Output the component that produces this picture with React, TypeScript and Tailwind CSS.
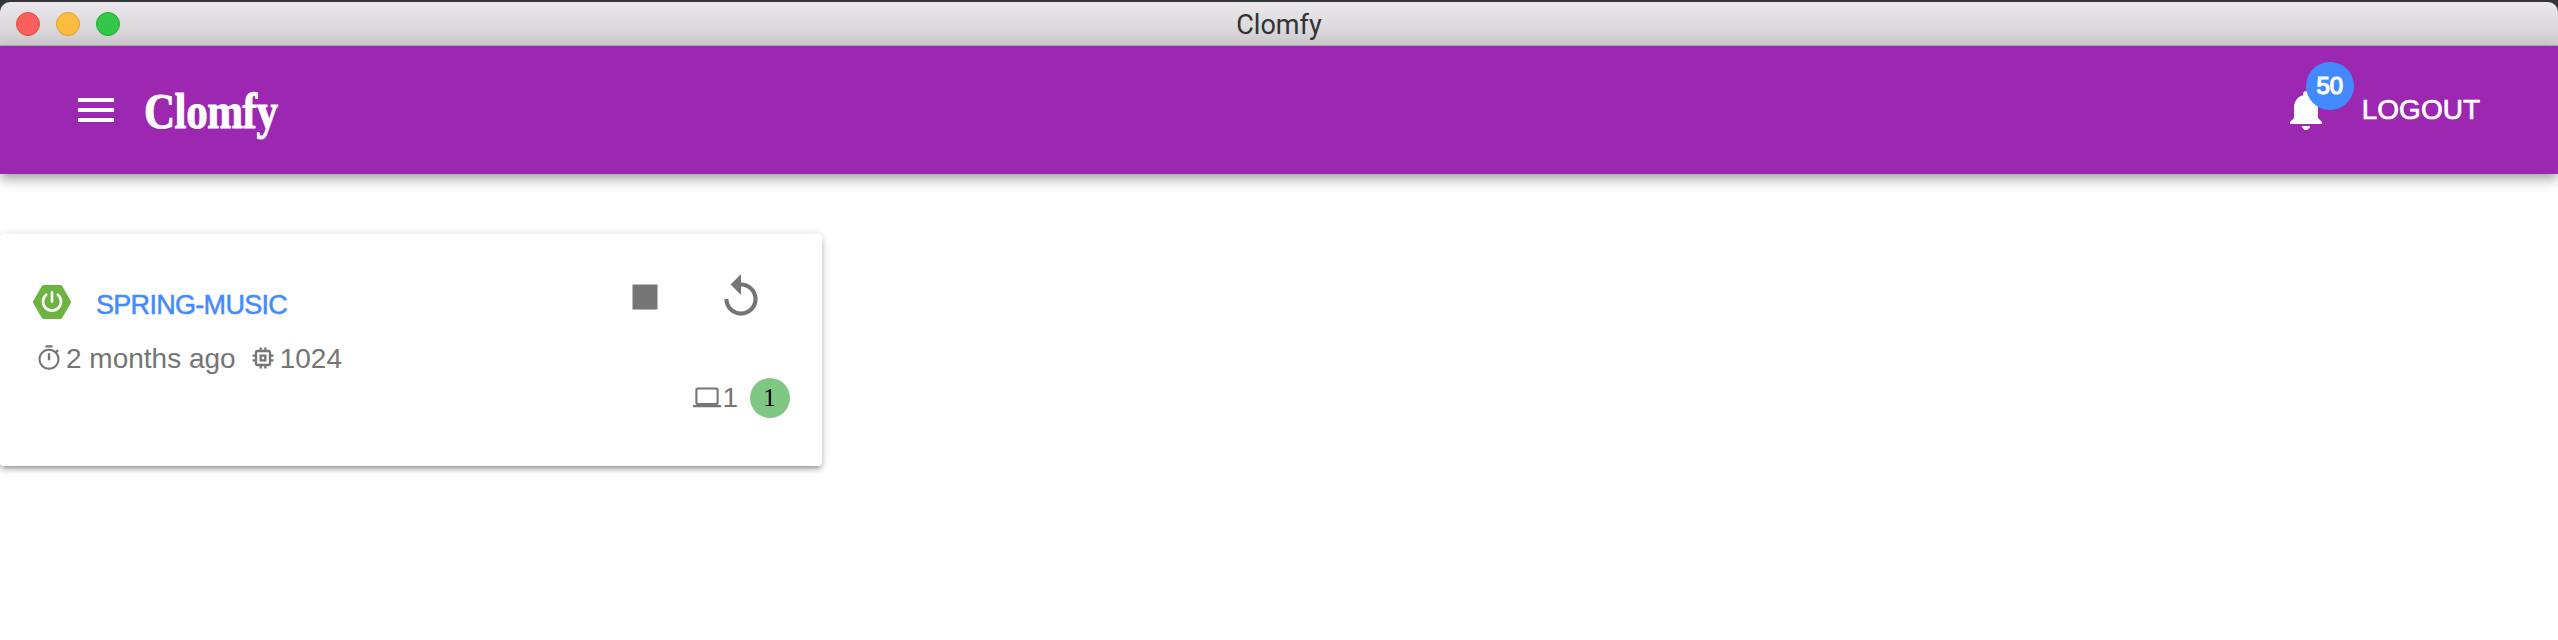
import React from "react";

function Icon({ d, className }: { d: string; className: string }) {
  return (
    <svg viewBox="0 0 24 24" fill="currentColor" className={className} aria-hidden="true">
      <path d={d} />
    </svg>
  );
}

const MENU = "M3 18h18v-2H3v2zm0-5h18v-2H3v2zm0-7v2h18V6H3z";
const BELL =
  "M12 22c1.1 0 2-.9 2-2h-4c0 1.1.89 2 2 2zm6-6v-5c0-3.07-1.64-5.64-4.5-6.32V4c0-.83-.67-1.5-1.5-1.5s-1.5.67-1.5 1.5v.68C7.63 5.36 6 7.92 6 11v5l-2 2v1h16v-1l-2-2z";
const STOP = "M6 6h12v12H6z";
const REPLAY = "M12 5V1L7 6l5 5V7c3.31 0 6 2.69 6 6s-2.69 6-6 6-6-2.69-6-6H4c0 4.42 3.58 8 8 8s8-3.58 8-8-3.58-8-8-8z";
const TIMER =
  "M15 1H9v2h6V1zm-4 13h2V8h-2v6zm8.030-6.610l1.420-1.420c-.43-.51-.9-.99-1.410-1.410l-1.420 1.420C16.070 4.740 14.120 4 12 4c-4.970 0-9 4.030-9 9s4.020 9 9 9 9-4.030 9-9c0-2.120-.74-4.070-1.970-5.610zM12 20.200c-3.980 0-7.200-3.220-7.200-7.200s3.220-7.200 7.200-7.200 7.200 3.220 7.200 7.200-3.220 7.200-7.200 7.200z";
const MEMORY =
  "M15 9H9v6h6V9zm-2 4h-2v-2h2v2zm8-2V9h-2V7c0-1.1-.9-2-2-2h-2V3h-2v2h-2V3H9v2H7c-1.1 0-2 .9-2 2v2H3v2h2v2H3v2h2v2c0 1.1.9 2 2 2h2v2h2v-2h2v2h2v-2h2c1.1 0 2-.9 2-2v-2h2v-2h-2v-2h2zm-4 6H7V7h10v10z";
const LAPTOP =
  "M20 18c1.1 0 1.99-.9 1.99-2L22 5c0-1.1-.9-2-2-2H4c-1.1 0-2 .9-2 2v11c0 1.1.9 2 2 2H0v2h24v-2h-4zM4.400 4.800h15.200q.6 0 .6.6v10.200q0 .6-.6.6H4.400q-.6 0-.6-.6V5.400q0-.6.6-.6z";

function SpringIcon() {
  return (
    <svg viewBox="0 0 38 34" className="h-[34px] w-[38px] shrink-0" aria-hidden="true">
      <path
        d="M10.8 0h16.4q1.4 0 2.1 1.2l8.2 14.4q.8 1.4 0 2.8l-8.2 14.4q-.7 1.2-2.1 1.2H10.8q-1.4 0-2.1-1.2L.5 18.4q-.8-1.4 0-2.8L8.700 1.200Q9.400 0 10.800 0z"
        fill="#6db33f"
      />
      <path
        d="M13.200 9.700a9 9 0 1 0 11.600 0M19 7.400v9.200"
        fill="none"
        stroke="#fff"
        strokeWidth="2.600"
        strokeLinecap="round"
      />
    </svg>
  );
}

function TitleBar() {
  return (
    <div className="h-[46px] bg-[#33373c] pt-[2px]">
      <div className="relative flex h-[44px] items-center justify-center rounded-t-[10px] border-b border-[#b1afb1] bg-linear-to-b from-[#ebe9eb] to-[#d1cfd1]">
        <div className="absolute top-[10px] left-4 flex gap-4">
          <span className="size-6 rounded-full border border-[#e2463f] bg-[#fc605c]" />
          <span className="size-6 rounded-full border border-[#dfa023] bg-[#fdbc40]" />
          <span className="size-6 rounded-full border border-[#1dad2c] bg-[#34c84a]" />
        </div>
        <span className="pt-[3px] font-[Roboto,sans-serif] text-[27px] leading-none text-[#333]">Clomfy</span>
      </div>
    </div>
  );
}

function AppBar() {
  return (
    <header className="relative flex h-32 items-center justify-between bg-[#9c27b0] px-[72px] text-white shadow-[0_4px_8px_-2px_rgba(0,0,0,0.2),0_8px_10px_0_rgba(0,0,0,0.14),0_2px_20px_0_rgba(0,0,0,0.12)]">
      <div className="flex items-center gap-6">
        <Icon d={MENU} className="size-12" />
        <h1 className="origin-left scale-x-[0.86] pt-px font-['Liberation_Serif',serif] text-[50px] leading-none font-bold tracking-[-0.5px] [-webkit-text-stroke:1px_white]">
          Clomfy
        </h1>
      </div>
      <div className="flex items-center pr-[6px]">
        <div className="relative mr-8 size-12">
          <Icon d={BELL} className="size-12" />
          <span className="absolute -top-6 left-6 flex size-12 items-center justify-center rounded-full bg-[#448aff] font-['Liberation_Sans',sans-serif] text-[24px] [-webkit-text-stroke:1.2px_white]">
            50
          </span>
        </div>
        <span className="font-['Liberation_Sans',sans-serif] text-[28px] leading-none [-webkit-text-stroke:0.7px_white]">LOGOUT</span>
      </div>
    </header>
  );
}

function AppCard() {
  return (
    <article className="mt-[60px] flex h-[232px] w-[822px] flex-col rounded-[4px] bg-white pr-8 pl-[33px] font-['Liberation_Sans',sans-serif] text-[28px] leading-8 text-[#757575] shadow-[0_2px_10px_0_rgba(0,0,0,0.2),0_4px_4px_0_rgba(0,0,0,0.14),0_6px_2px_-4px_rgba(0,0,0,0.12)]">
      <div className="flex pt-[38px]">
        <div className="flex flex-1 items-start pt-[13px]">
          <SpringIcon />
          <a className="mt-[4px] ml-[25px] text-[27px] leading-8 tracking-[-0.7px] text-[#448aff] [-webkit-text-stroke:0.5px_#448aff]">
            SPRING-MUSIC
          </a>
        </div>
        <div className="flex gap-[46px] pr-6">
          <Icon d={STOP} className="size-[50px]" />
          <Icon d={REPLAY} className="size-[50px]" />
        </div>
      </div>
      <div className="mt-[19px] flex h-[34px] items-center pl-[2px]">
        <Icon d={TIMER} className="size-7" />
        <span className="ml-[3px] pt-px">2 months ago</span>
        <Icon d={MEMORY} className="ml-[13px] size-7" />
        <span className="ml-[3px] pt-px">1024</span>
      </div>
      <div className="mt-[3px] flex h-10 items-center justify-end">
        <Icon d={LAPTOP} className="size-7" />
        <span className="ml-px">1</span>
        <span className="ml-3 flex size-10 items-center justify-center rounded-full bg-[#81c784] pr-px font-['Liberation_Serif',serif] text-[25px] text-black">
          1
        </span>
      </div>
    </article>
  );
}

export default function App() {
  return (
    <div className="h-[640px] w-full overflow-hidden bg-white">
      <TitleBar />
      <AppBar />
      <AppCard />
    </div>
  );
}
